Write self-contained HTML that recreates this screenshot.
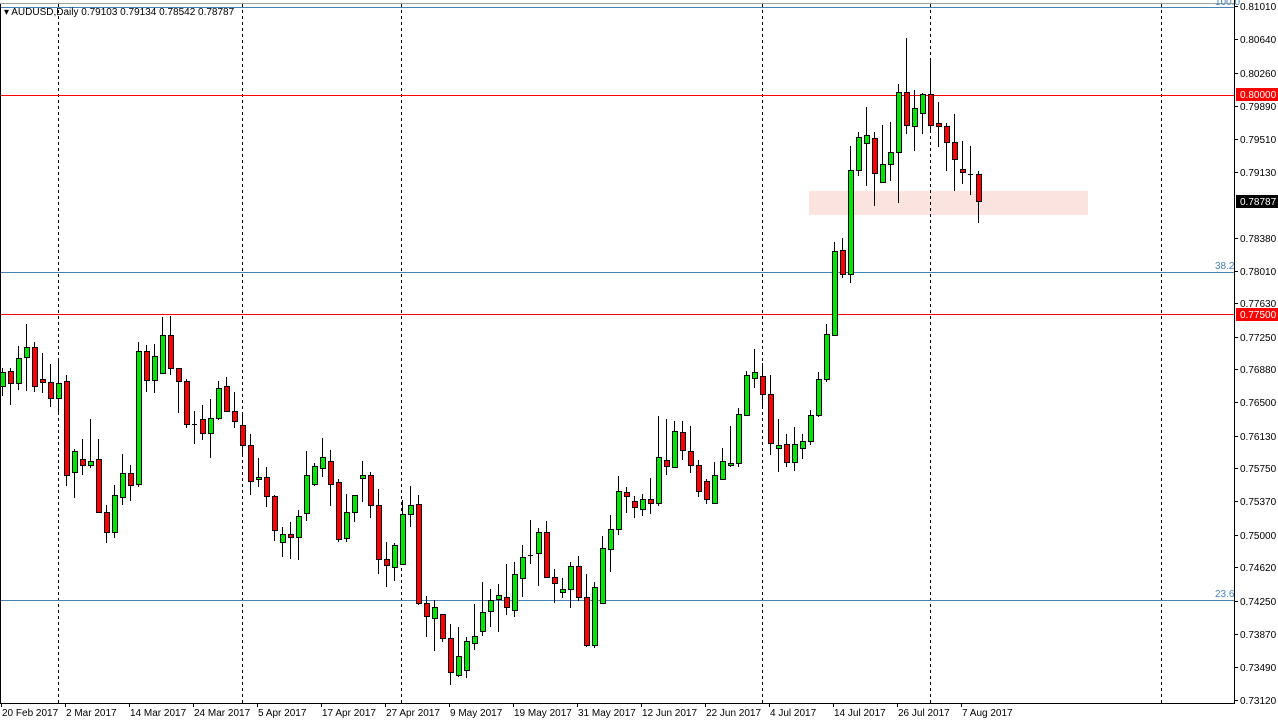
<!DOCTYPE html>
<html><head><meta charset="utf-8"><style>
html,body{margin:0;padding:0;background:#fff;}
body{width:1278px;height:722px;overflow:hidden;position:relative;font-family:"Liberation Sans",sans-serif;}
svg{position:absolute;left:0;top:0;}
</style></head><body>
<svg id="c" width="1278" height="722" xmlns="http://www.w3.org/2000/svg" shape-rendering="crispEdges" font-family="Liberation Sans, sans-serif" font-size="10">
<rect x="0" y="0" width="1278" height="722" fill="#fff"/>
<line x1="0" y1="3.5" x2="1234" y2="3.5" stroke="#a0a0a0"/>
<rect x="809" y="191" width="279" height="24" fill="#fbe4e0"/>
<g stroke="#000" stroke-dasharray="3,3">
<line x1="58.5" y1="4" x2="58.5" y2="703"/><line x1="242.5" y1="4" x2="242.5" y2="703"/>
<line x1="401.5" y1="4" x2="401.5" y2="703"/><line x1="762.5" y1="4" x2="762.5" y2="703"/>
<line x1="930.5" y1="4" x2="930.5" y2="703"/><line x1="1161.5" y1="4" x2="1161.5" y2="703"/>
</g>
<g stroke="#4682b4"><line x1="0" y1="7.5" x2="1234" y2="7.5"/><line x1="0" y1="272.5" x2="1234" y2="272.5"/><line x1="0" y1="600.5" x2="1234" y2="600.5"/></g>
<g stroke="#f00"><line x1="0" y1="95.5" x2="1234" y2="95.5"/><line x1="0" y1="314.5" x2="1234" y2="314.5"/></g>
<g fill="#4682b4"><text x="1215" y="269">38.2</text><text x="1215" y="597">23.6</text><text x="1215" y="5">100.0</text></g>
<g id="cd"></g>
<line x1="1234.5" y1="0" x2="1234.5" y2="703" stroke="#000"/>
<line x1="0" y1="703.5" x2="1235" y2="703.5" stroke="#000"/>
<line x1="0.5" y1="4" x2="0.5" y2="703" stroke="#000"/>
<g id="ax"></g>
<rect x="1236" y="88" width="42" height="13" fill="#f00"/>
<rect x="1236" y="308" width="42" height="13" fill="#f00"/>
<rect x="1236" y="195" width="42" height="13" fill="#000"/>
<text x="1240" y="98" fill="#fff">0.80000</text>
<text x="1240" y="318" fill="#fff">0.77500</text>
<text x="1240" y="205" fill="#fff">0.78787</text>
<text x="4" y="15" fill="#000">▾ AUDUSD,Daily  0.79103 0.79134 0.78542 0.78787</text>
</svg>
<script>
var D=[[372,386,368,396,'g'],[371,383,368,405,'r'],[358,383,346,390,'g'],[347,357,324,391,'g'],[347,386,342,392,'r'],[379,382,353,393,'r'],[382,398,364,407,'r'],[383,398,358,415,'g'],[381,475,375,486,'r'],[451,472,449,498,'g'],
[459,465,439,475,'r'],[461,465,419,468,'g'],[459,512,439,513,'r'],[512,532,505,543,'r'],[495,532,485,538,'g'],[473,497,454,505,'g'],[473,485,465,501,'r'],[351,484,342,487,'g'],[351,380,345,392,'r'],[356,380,344,393,'g'],
[335,373,317,373,'g'],[335,368,316,375,'r'],[368,381,368,413,'r'],[381,424,379,428,'r'],[424,425,411,444,'r'],[419,433,405,440,'r'],[418,433,399,458,'g'],[388,418,381,420,'g'],[386,411,377,412,'r'],[411,421,392,428,'r'],
[425,445,412,456,'r'],[445,481,434,495,'r'],[477,479,458,487,'g'],[477,496,467,507,'r'],[496,530,495,541,'r'],[534,542,527,557,'g'],[534,537,522,559,'r'],[516,537,510,560,'g'],[475,513,451,521,'g'],[466,484,463,486,'g'],
[457,468,438,477,'g'],[461,484,450,506,'r'],[482,539,479,542,'r'],[512,538,494,542,'g'],[495,512,495,522,'g'],[475,478,461,502,'g'],[475,505,472,518,'r'],[505,559,489,574,'r'],[559,565,542,587,'r'],[545,567,543,581,'g'],
[514,564,500,564,'g'],[505,514,486,527,'g'],[504,603,495,605,'r'],[603,616,596,637,'r'],[607,618,600,651,'g'],[614,638,614,642,'r'],[638,672,624,685,'r'],[656,675,627,677,'g'],[641,670,637,678,'g'],[636,643,604,650,'g'],
[612,631,582,636,'g'],[600,611,589,627,'g'],[595,599,584,632,'g'],[597,607,564,615,'r'],[574,610,562,617,'g'],[557,578,545,597,'g'],[555,556,520,564,'r'],[532,553,528,586,'g'],[532,577,521,578,'r'],[577,583,569,603,'r'],
[589,592,578,598,'g'],[566,589,562,608,'g'],[566,597,556,601,'r'],[597,645,574,647,'r'],[587,645,582,648,'g'],[548,603,536,603,'g'],[529,549,515,572,'g'],[491,529,476,535,'g'],[492,496,487,513,'r'],[501,507,496,518,'r'],
[499,509,494,516,'g'],[499,503,478,514,'r'],[457,503,416,506,'g'],[460,466,419,475,'r'],[431,467,421,468,'g'],[432,450,421,460,'r'],[451,465,426,473,'r'],[465,491,460,497,'r'],[481,499,479,504,'r'],[475,503,462,503,'g'],
[461,479,448,480,'g'],[463,465,426,467,'g'],[414,463,408,467,'g'],[375,415,371,416,'g'],[372,378,349,388,'g'],[376,394,363,408,'r'],[394,443,375,455,'r'],[445,448,419,472,'g'],[444,462,434,467,'r'],[444,462,427,471,'g'],
[441,448,434,459,'g'],[415,441,410,445,'g'],[379,415,372,417,'g'],[334,379,324,382,'g'],[251,335,242,336,'g'],[250,274,238,278,'r'],[170,274,146,283,'g'],[137,170,132,176,'g'],[135,143,107,186,'g'],[138,173,132,206,'r'],
[164,182,125,182,'g'],[152,164,122,181,'g'],[92,152,84,203,'g'],[92,125,38,134,'r'],[108,126,90,151,'g'],[94,113,93,134,'g'],[94,125,58,132,'r'],[123,126,102,147,'r'],[126,142,123,171,'r'],[142,159,114,191,'r'],
[169,172,141,184,'r'],[174,174,146,195,'r'],[174,201,171,223,'r']];
var s='';
for(var i=0;i<D.length;i++){var d=D[i],c=2+8*i;
s+='<line x1="'+(c+0.5)+'" y1="'+d[2]+'" x2="'+(c+0.5)+'" y2="'+d[3]+'" stroke="#000"/>';
var h=Math.max(d[1]-d[0],1);
if(d[1]-d[0]<=1){s+='<line x1="'+(c-2)+'" y1="'+(d[0]+0.5)+'" x2="'+(c+3)+'" y2="'+(d[0]+0.5)+'" stroke="#000"/>';}
else s+='<rect x="'+(c-2+0.5)+'" y="'+(d[0]+0.5)+'" width="5" height="'+h+'" fill="'+(d[4]=='g'?'#00e600':'#f00')+'" stroke="#000"/>';}
document.getElementById('cd').innerHTML=s;
var P=[['0.81010',6],['0.80640',39],['0.80260',73],['0.79890',106],['0.79510',139],['0.79130',172],['0.78380',238],['0.78010',271],['0.77630',303],['0.77250',337],['0.76880',369],['0.76500',402],['0.76130',436],['0.75750',468],['0.75370',501],['0.75000',535],['0.74620',567],['0.74250',601],['0.73870',634],['0.73490',667],['0.73120',700]];
var a='';
P.forEach(function(p){a+='<line x1="1234" y1="'+(p[1]+0.5)+'" x2="1238" y2="'+(p[1]+0.5)+'" stroke="#000"/><text x="1240" y="'+(p[1]+4)+'">'+p[0]+'</text>';});
var T=['20 Feb 2017','2 Mar 2017','14 Mar 2017','24 Mar 2017','5 Apr 2017','17 Apr 2017','27 Apr 2017','9 May 2017','19 May 2017','31 May 2017','12 Jun 2017','22 Jun 2017','4 Jul 2017','14 Jul 2017','26 Jul 2017','7 Aug 2017'];
T.forEach(function(t,i){var x=1+64*i;a+='<line x1="'+(x+0.5)+'" y1="703" x2="'+(x+0.5)+'" y2="707" stroke="#000"/><text x="'+(x+1)+'" y="716">'+t+'</text>';});
document.getElementById('ax').innerHTML=a;
</script>
</body></html>
